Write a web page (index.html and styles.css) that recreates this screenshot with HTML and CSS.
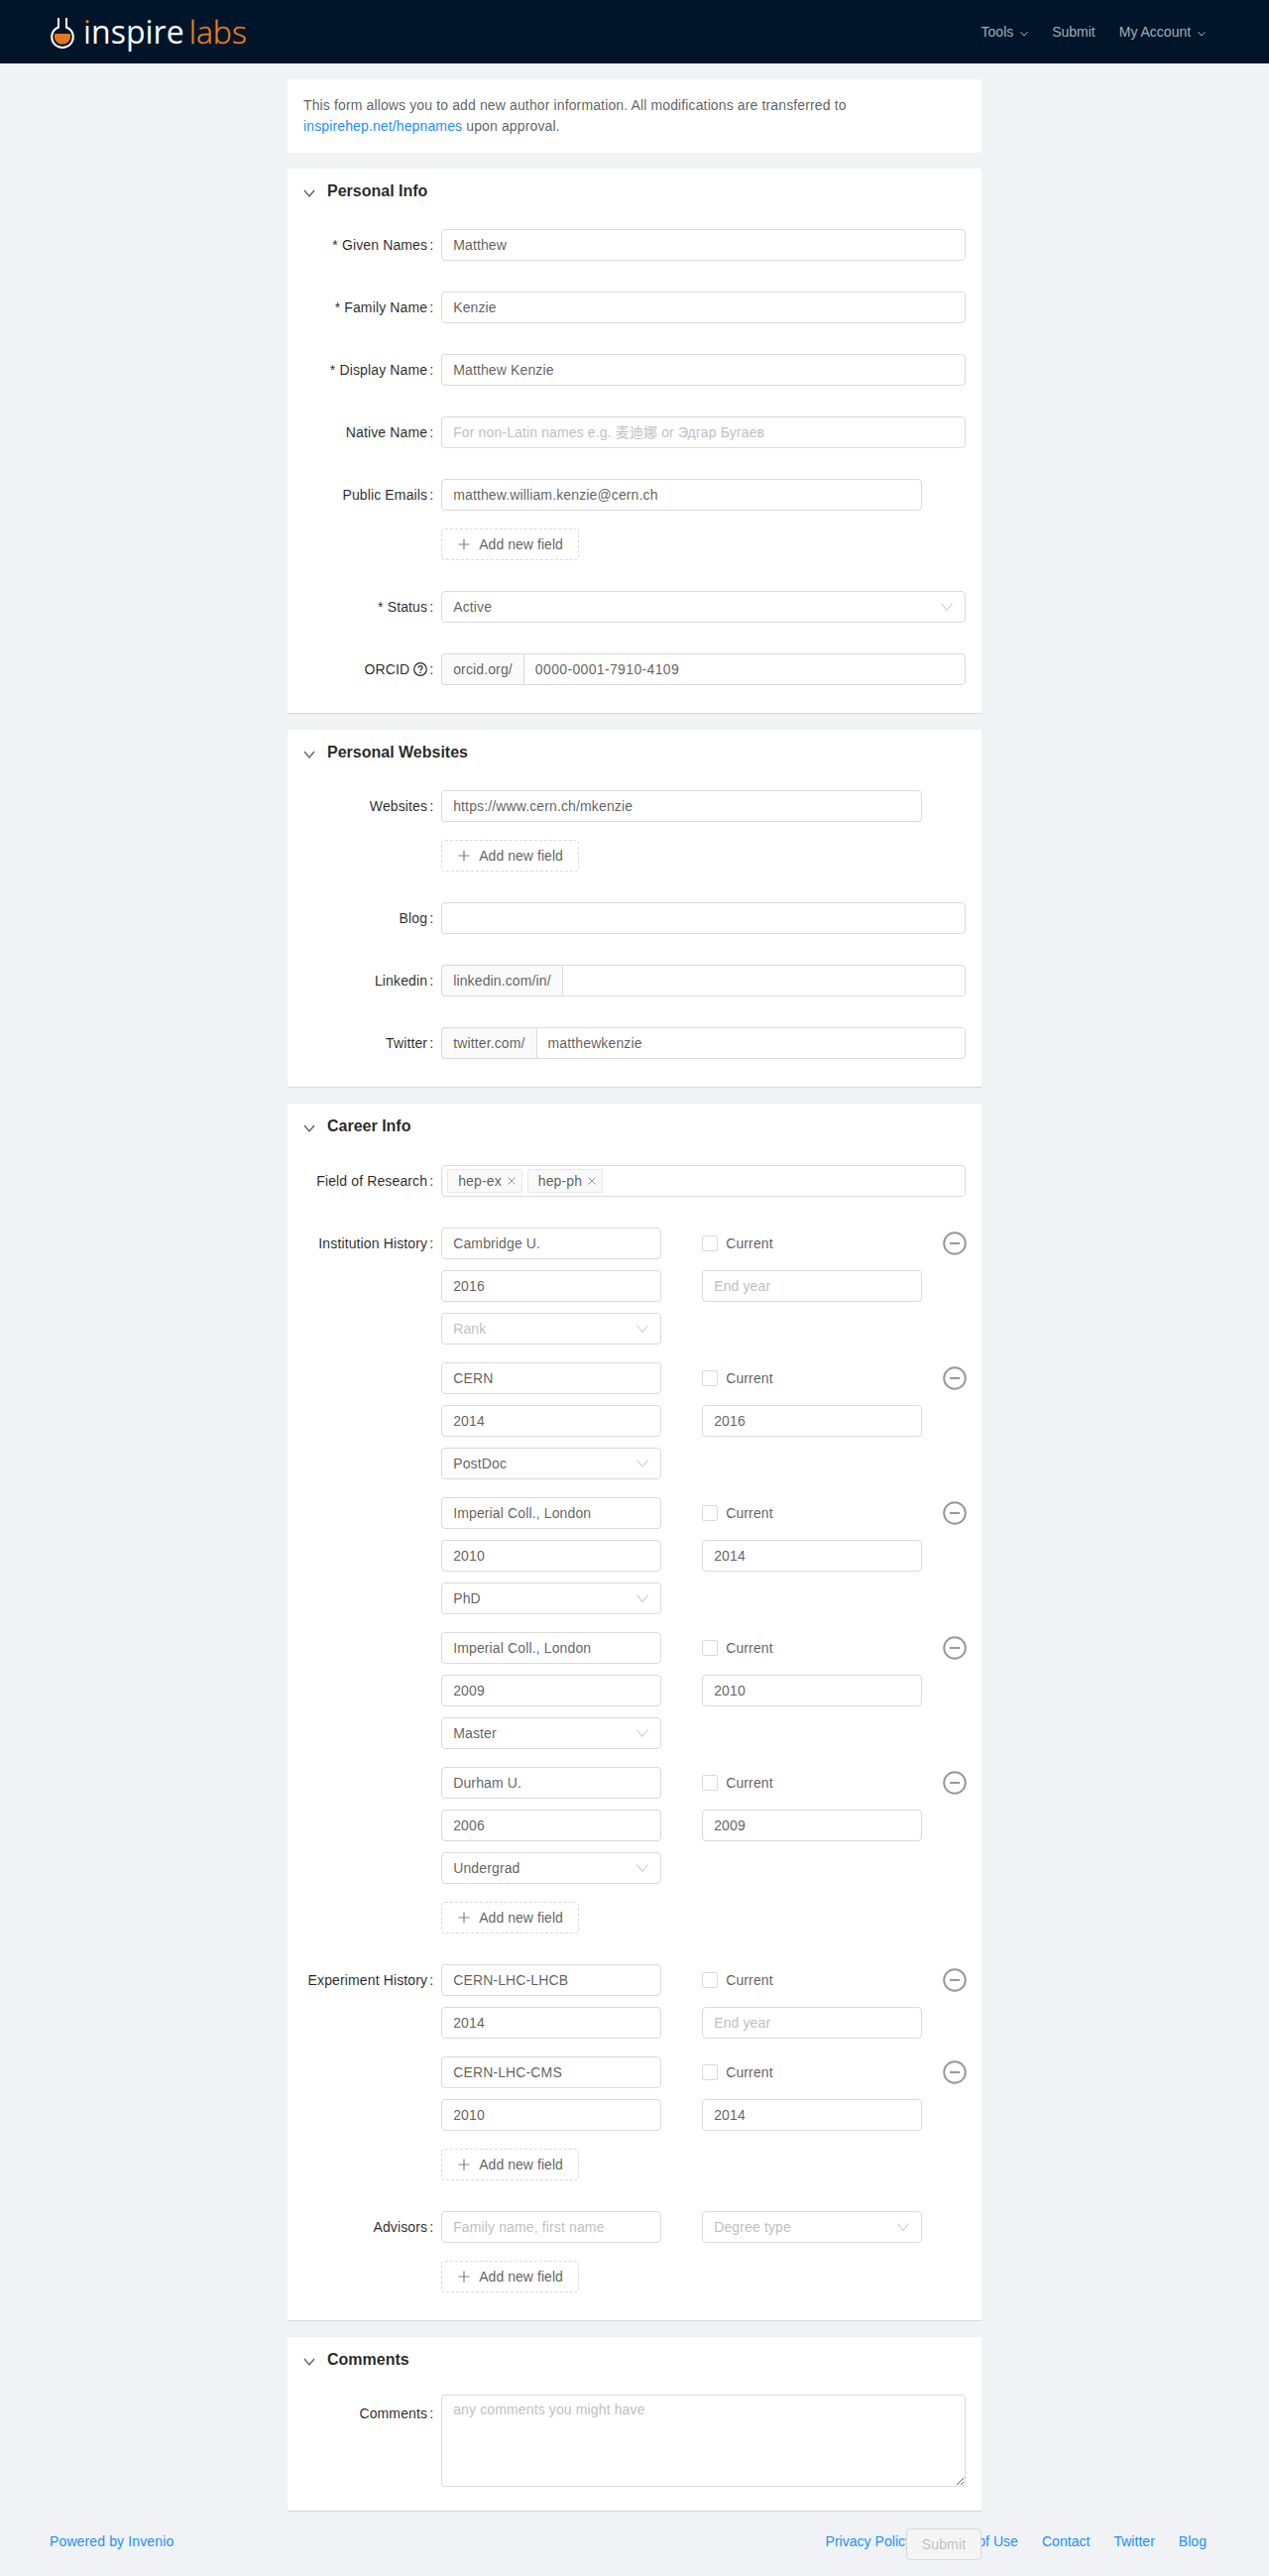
FILE: index.html
```html
<!DOCTYPE html>
<html lang="en">
<head>
  <meta charset="UTF-8">
  <title>inspire labs - Author form</title>
  <link rel="stylesheet" href="styles.css">
</head>
<body>
  <!-- top bar -->
  <header class="topbar">
    <a class="logo" href="#">
      <svg class="logo-flask" viewBox="0 0 24 32" width="24" height="32">
        <path class="flask-liquid" d="M4.3 17h15.4c1.6 6-2 10.6-7.7 10.6S2.7 23 4.3 17z"/>
        <path class="flask-glass" d="M8 1v9.5C3.8 12.3 1.2 16 1.2 20.3 1.2 26.3 6 31 12 31s10.8-4.7 10.8-10.7c0-4.3-2.6-8-6.8-9.8V1"/>
      </svg>
      <span class="logo-text"><span class="logo-i">i</span>nspire</span>
      <span class="logo-labs">labs</span>
    </a>
    <nav class="topnav">
      <a href="#">Tools <svg class="nav-arrow" viewBox="0 0 8 6" width="8" height="6"><path d="M.3 1L4 5l3.700-4"/></svg></a>
      <a href="#">Submit</a>
      <a href="#">My Account <svg class="nav-arrow" viewBox="0 0 8 6" width="8" height="6"><path d="M.3 1L4 5l3.700-4"/></svg></a>
    </nav>
  </header>

  <main class="content">
    <div class="card intro">
      This form allows you to add new author information. All modifications are transferred to
      <a href="#">inspirehep.net/hepnames</a> upon approval.
    </div>

    <!-- Personal Info -->
    <section class="card">
      <h2 class="card-title"><svg class="title-arrow" viewBox="0 0 12 8" width="12" height="8"><path d="M1 1l5 6 5-6"/></svg>Personal Info</h2>
      <div class="form-item">
        <label class="form-label">* Given Names<span class="colon">:</span></label>
        <input class="input" type="text" value="Matthew">
      </div>
      <div class="form-item">
        <label class="form-label">* Family Name<span class="colon">:</span></label>
        <input class="input" type="text" value="Kenzie">
      </div>
      <div class="form-item">
        <label class="form-label">* Display Name<span class="colon">:</span></label>
        <input class="input" type="text" value="Matthew Kenzie">
      </div>
      <div class="form-item">
        <label class="form-label">Native Name<span class="colon">:</span></label>
        <input class="input" type="text" placeholder="For non-Latin names e.g. 麦迪娜 or Эдгар Бугаев">
      </div>
      <div class="form-item">
        <label class="form-label">Public Emails<span class="colon">:</span></label>
        <div class="field-list">
          <input class="input input-short" type="text" value="matthew.william.kenzie@cern.ch">
          <button class="add-btn" type="button"><svg class="plus" viewBox="0 0 12 12" width="12" height="12"><path d="M6 .5v11M.5 6h11"/></svg>Add new field</button>
        </div>
      </div>
      <div class="form-item">
        <label class="form-label">* Status<span class="colon">:</span></label>
        <div class="select"><span>Active</span><svg class="select-arrow" viewBox="0 0 12 8" width="12" height="8"><path d="M.5.5L6 7.5l5.500-7"/></svg></div>
      </div>
      <div class="form-item">
        <label class="form-label">ORCID <svg class="help" viewBox="0 0 14 14" width="14" height="14"><circle cx="7" cy="7" r="6.3"/><path d="M5 5.500C5 4.300 5.900 3.600 7 3.600s2 .7 2 1.800c0 1.500-2 1.600-2 3.100"/><circle class="help-dot" cx="7" cy="10.400" r=".8"/></svg><span class="colon">:</span></label>
        <div class="input-group">
          <span class="addon">orcid.org/</span>
          <input class="input input-digits" type="text" value="0000-0001-7910-4109">
        </div>
      </div>
    </section>

    <!-- Personal Websites -->
    <section class="card">
      <h2 class="card-title"><svg class="title-arrow" viewBox="0 0 12 8" width="12" height="8"><path d="M1 1l5 6 5-6"/></svg>Personal Websites</h2>
      <div class="form-item">
        <label class="form-label">Websites<span class="colon">:</span></label>
        <div class="field-list">
          <input class="input input-short" type="text" value="https://www.cern.ch/mkenzie">
          <button class="add-btn" type="button"><svg class="plus" viewBox="0 0 12 12" width="12" height="12"><path d="M6 .5v11M.5 6h11"/></svg>Add new field</button>
        </div>
      </div>
      <div class="form-item">
        <label class="form-label">Blog<span class="colon">:</span></label>
        <input class="input" type="text">
      </div>
      <div class="form-item">
        <label class="form-label">Linkedin<span class="colon">:</span></label>
        <div class="input-group">
          <span class="addon">linkedin.com/in/</span>
          <input class="input" type="text">
        </div>
      </div>
      <div class="form-item">
        <label class="form-label">Twitter<span class="colon">:</span></label>
        <div class="input-group">
          <span class="addon">twitter.com/</span>
          <input class="input" type="text" value="matthewkenzie">
        </div>
      </div>
    </section>

    <!-- Career Info -->
    <section class="card card-career">
      <h2 class="card-title"><svg class="title-arrow" viewBox="0 0 12 8" width="12" height="8"><path d="M1 1l5 6 5-6"/></svg>Career Info</h2>
      <div class="form-item">
        <label class="form-label">Field of Research<span class="colon">:</span></label>
        <div class="tags-select">
          <span class="tag">hep-ex<svg class="tag-x" viewBox="0 0 8 8" width="8" height="8"><path d="M.5.5l7 7M7.5.5l-7 7"/></svg></span>
          <span class="tag">hep-ph<svg class="tag-x" viewBox="0 0 8 8" width="8" height="8"><path d="M.5.5l7 7M7.5.5l-7 7"/></svg></span>
        </div>
      </div>
      <div class="form-item">
        <label class="form-label">Institution History<span class="colon">:</span></label>
        <div class="field-list">
          <div class="entry">
            <div class="entry-col">
              <input class="input" type="text" value="Cambridge U.">
              <input class="input" type="text" value="2016">
              <div class="select placeholder"><span>Rank</span><svg class="select-arrow" viewBox="0 0 12 8" width="12" height="8"><path d="M.5.5L6 7.5l5.500-7"/></svg></div>
            </div>
            <div class="entry-col">
              <label class="check"><span class="check-box"></span>Current</label>
              <input class="input" type="text" placeholder="End year">
            </div>
            <div class="entry-action"><svg class="minus" viewBox="0 0 24 24" width="24" height="24"><circle cx="12" cy="12" r="10.8"/><path d="M7 12h10"/></svg></div>
          </div>
          <div class="entry">
            <div class="entry-col">
              <input class="input" type="text" value="CERN">
              <input class="input" type="text" value="2014">
              <div class="select"><span>PostDoc</span><svg class="select-arrow" viewBox="0 0 12 8" width="12" height="8"><path d="M.5.5L6 7.5l5.500-7"/></svg></div>
            </div>
            <div class="entry-col">
              <label class="check"><span class="check-box"></span>Current</label>
              <input class="input" type="text" value="2016">
            </div>
            <div class="entry-action"><svg class="minus" viewBox="0 0 24 24" width="24" height="24"><circle cx="12" cy="12" r="10.8"/><path d="M7 12h10"/></svg></div>
          </div>
          <div class="entry">
            <div class="entry-col">
              <input class="input" type="text" value="Imperial Coll., London">
              <input class="input" type="text" value="2010">
              <div class="select"><span>PhD</span><svg class="select-arrow" viewBox="0 0 12 8" width="12" height="8"><path d="M.5.5L6 7.5l5.500-7"/></svg></div>
            </div>
            <div class="entry-col">
              <label class="check"><span class="check-box"></span>Current</label>
              <input class="input" type="text" value="2014">
            </div>
            <div class="entry-action"><svg class="minus" viewBox="0 0 24 24" width="24" height="24"><circle cx="12" cy="12" r="10.8"/><path d="M7 12h10"/></svg></div>
          </div>
          <div class="entry">
            <div class="entry-col">
              <input class="input" type="text" value="Imperial Coll., London">
              <input class="input" type="text" value="2009">
              <div class="select"><span>Master</span><svg class="select-arrow" viewBox="0 0 12 8" width="12" height="8"><path d="M.5.5L6 7.5l5.500-7"/></svg></div>
            </div>
            <div class="entry-col">
              <label class="check"><span class="check-box"></span>Current</label>
              <input class="input" type="text" value="2010">
            </div>
            <div class="entry-action"><svg class="minus" viewBox="0 0 24 24" width="24" height="24"><circle cx="12" cy="12" r="10.8"/><path d="M7 12h10"/></svg></div>
          </div>
          <div class="entry">
            <div class="entry-col">
              <input class="input" type="text" value="Durham U.">
              <input class="input" type="text" value="2006">
              <div class="select"><span>Undergrad</span><svg class="select-arrow" viewBox="0 0 12 8" width="12" height="8"><path d="M.5.5L6 7.5l5.500-7"/></svg></div>
            </div>
            <div class="entry-col">
              <label class="check"><span class="check-box"></span>Current</label>
              <input class="input" type="text" value="2009">
            </div>
            <div class="entry-action"><svg class="minus" viewBox="0 0 24 24" width="24" height="24"><circle cx="12" cy="12" r="10.8"/><path d="M7 12h10"/></svg></div>
          </div>
          <button class="add-btn" type="button"><svg class="plus" viewBox="0 0 12 12" width="12" height="12"><path d="M6 .5v11M.5 6h11"/></svg>Add new field</button>
        </div>
      </div>
      <div class="form-item">
        <label class="form-label">Experiment History<span class="colon">:</span></label>
        <div class="field-list">
          <div class="entry">
            <div class="entry-col">
              <input class="input" type="text" value="CERN-LHC-LHCB">
              <input class="input" type="text" value="2014">
            </div>
            <div class="entry-col">
              <label class="check"><span class="check-box"></span>Current</label>
              <input class="input" type="text" placeholder="End year">
            </div>
            <div class="entry-action"><svg class="minus" viewBox="0 0 24 24" width="24" height="24"><circle cx="12" cy="12" r="10.8"/><path d="M7 12h10"/></svg></div>
          </div>
          <div class="entry">
            <div class="entry-col">
              <input class="input" type="text" value="CERN-LHC-CMS">
              <input class="input" type="text" value="2010">
            </div>
            <div class="entry-col">
              <label class="check"><span class="check-box"></span>Current</label>
              <input class="input" type="text" value="2014">
            </div>
            <div class="entry-action"><svg class="minus" viewBox="0 0 24 24" width="24" height="24"><circle cx="12" cy="12" r="10.8"/><path d="M7 12h10"/></svg></div>
          </div>
          <button class="add-btn" type="button"><svg class="plus" viewBox="0 0 12 12" width="12" height="12"><path d="M6 .5v11M.5 6h11"/></svg>Add new field</button>
        </div>
      </div>
      <div class="form-item">
        <label class="form-label">Advisors<span class="colon">:</span></label>
        <div class="field-list">
          <div class="entry">
            <div class="entry-col">
              <input class="input" type="text" placeholder="Family name, first name">
            </div>
            <div class="entry-col">
              <div class="select placeholder"><span>Degree type</span><svg class="select-arrow" viewBox="0 0 12 8" width="12" height="8"><path d="M.5.5L6 7.5l5.500-7"/></svg></div>
            </div>
          </div>
          <button class="add-btn" type="button"><svg class="plus" viewBox="0 0 12 12" width="12" height="12"><path d="M6 .5v11M.5 6h11"/></svg>Add new field</button>
        </div>
      </div>
    </section>

    <!-- Comments -->
    <section class="card card-comments">
      <h2 class="card-title"><svg class="title-arrow" viewBox="0 0 12 8" width="12" height="8"><path d="M1 1l5 6 5-6"/></svg>Comments</h2>
      <div class="form-item">
        <label class="form-label label-top">Comments<span class="colon">:</span></label>
        <textarea class="input textarea" placeholder="any comments you might have"></textarea>
      </div>
    </section>

    <button class="submit-btn" type="button" disabled>Submit</button>
  </main>

  <footer class="footer">
    <a href="#">Powered by Invenio</a>
    <div class="footer-links">
      <a href="#">Privacy Policy</a>
      <a href="#">Terms of Use</a>
      <a href="#">Contact</a>
      <a href="#">Twitter</a>
      <a href="#">Blog</a>
    </div>
  </footer>
</body>
</html>
```

FILE: styles.css
```css
* { box-sizing: border-box; margin: 0; padding: 0; }
body {
  font-family: "Liberation Sans", "Noto Sans CJK SC", sans-serif;
  font-size: 14px;
  line-height: 21px;
  letter-spacing: 0.13px;
  color: rgba(0, 0, 0, 0.65);
  background-color: #f0f2f5;
}
a { color: #1890ff; text-decoration: none; }

/* top bar */
.topbar {
  height: 64px;
  background-color: #001529;
  display: flex;
  align-items: center;
  justify-content: space-between;
  padding: 0 64px 0 51px;
}
.logo { display: flex; align-items: center; letter-spacing: 0; }
.logo-flask { margin-right: 9px; margin-top: 1px; }
.flask-glass { fill: none; stroke: #fff; stroke-width: 2; }
.flask-liquid { fill: #e5761f; }
.logo-text, .logo-labs {
  font-family: "Open Sans", sans-serif;
  font-size: 32px;
  line-height: 64px;
}
.logo-text { color: #fff; font-weight: 400; }
.logo-i {
  background: linear-gradient(#e5761f 0 38%, #fff 38%);
  -webkit-background-clip: text;
  background-clip: text;
  -webkit-text-fill-color: transparent;
}
.logo-labs {
  color: #ee8020;
  font-weight: 300;
  margin-left: 5px;
  -webkit-text-stroke: 0.3px #ee8020;
}
.topnav { display: flex; gap: 24px; letter-spacing: 0; }
.topnav a { color: rgba(255, 255, 255, 0.65); }
.nav-arrow { fill: none; stroke: rgba(255, 255, 255, 0.65); stroke-width: 1; margin-left: 3px; }

/* cards */
.content {
  position: relative;
  width: 700px;
  margin: 16px auto 0;
}
.card {
  background-color: #fff;
  padding: 0 16px 28px;
  margin-bottom: 16px;
  border-bottom: 1px solid #d9d9d9;
}
.card.intro { padding: 16px; border-bottom: 0; }
.card-comments { padding-bottom: 24px; margin-bottom: 0; }
.card-title {
  display: flex;
  align-items: center;
  font-size: 16px;
  line-height: 22px;
  font-weight: bold;
  letter-spacing: 0;
  color: rgba(0, 0, 0, 0.85);
  padding-top: 12px;
  margin-bottom: 27px;
}
.card-career .card-title { margin-bottom: 28px; }
.card-comments .card-title { margin-bottom: 24px; }
.title-arrow {
  width: 24px;
  padding-right: 12px;
  margin-top: 4px;
  fill: none;
  stroke: rgba(0, 0, 0, 0.65);
  stroke-width: 1.2;
  overflow: visible;
}

/* form rows */
.form-item {
  display: grid;
  grid-template-columns: 139.2px 1fr;
  margin-bottom: 31px;
}
.form-item:last-child { margin-bottom: 0; }
.form-label {
  display: flex;
  justify-content: flex-end;
  align-items: flex-start;
  line-height: 32px;
  color: rgba(0, 0, 0, 0.85);
  white-space: pre;
}
.label-top { padding-top: 3px; }
.colon { margin: 0 8px 0 2px; }
.help {
  align-self: flex-start;
  margin-top: 9px;
  fill: none;
  stroke: rgba(0, 0, 0, 0.85);
  stroke-width: 1.2;
}
.help-dot { fill: rgba(0, 0, 0, 0.85); stroke: none; }

.input {
  display: block;
  width: 100%;
  height: 32px;
  padding: 4px 11px;
  font: inherit;
  letter-spacing: inherit;
  color: rgba(0, 0, 0, 0.65);
  background-color: #fff;
  border: 1px solid #d9d9d9;
  border-radius: 4px;
  outline: none;
}
.input::placeholder { color: #bfbfbf; }
.input-short { width: 484.7px; }
.input-digits { letter-spacing: 0.35px; }
.textarea { height: 93px; line-height: 21px; }

.select {
  display: flex;
  align-items: center;
  justify-content: space-between;
  height: 32px;
  padding: 0 12px 0 11px;
  background-color: #fff;
  border: 1px solid #d9d9d9;
  border-radius: 4px;
}
.select.placeholder { color: #bfbfbf; }
.select-arrow { fill: none; stroke: #bfbfbf; stroke-width: 1; }

.input-group { display: flex; }
.addon {
  padding: 0 11px;
  line-height: 30px;
  background-color: #fafafa;
  border: 1px solid #d9d9d9;
  border-right: 0;
  border-radius: 4px 0 0 4px;
  white-space: nowrap;
}
.input-group .input { flex: 1; min-width: 0; border-radius: 0 4px 4px 0; }

.field-list { display: flex; flex-direction: column; gap: 18px; }
.add-btn {
  display: flex;
  align-items: center;
  align-self: flex-start;
  height: 32px;
  padding: 0 15px 0 16px;
  font: inherit;
  letter-spacing: 0.05px;
  color: rgba(0, 0, 0, 0.65);
  background-color: #fff;
  border: 1px dashed #d9d9d9;
  border-radius: 4px;
}
.plus { fill: none; stroke: rgba(0, 0, 0, 0.5); stroke-width: 1.2; margin-right: 9px; }

/* tags */
.tags-select {
  display: flex;
  align-items: center;
  gap: 5px;
  height: 32px;
  padding: 0 5px;
  border: 1px solid #d9d9d9;
  border-radius: 4px;
}
.tag {
  display: flex;
  align-items: center;
  height: 24px;
  padding: 0 6px 0 10px;
  line-height: 22px;
  background-color: #fafafa;
  border: 1px solid #e8e8e8;
  border-radius: 2px;
}
.tag-x { fill: none; stroke: rgba(0, 0, 0, 0.4); stroke-width: 1; margin-left: 6px; }

/* repeated history entries */
.entry { display: flex; }
.entry-col {
  display: flex;
  flex-direction: column;
  gap: 11px;
  width: 221.6px;
}
.entry-col + .entry-col { margin-left: 41.4px; }
.entry-action { padding-left: 21.6px; padding-top: 4px; }
.minus { display: block; fill: none; stroke: #999; stroke-width: 2; }
.check {
  display: flex;
  align-items: center;
  height: 32px;
}
.check-box {
  width: 16px;
  height: 16px;
  margin-right: 8px;
  background-color: #fff;
  border: 1px solid #d9d9d9;
  border-radius: 2px;
}

.submit-btn {
  position: absolute;
  right: 0;
  bottom: -49px;
  width: 76px;
  height: 32px;
  font: inherit;
  letter-spacing: inherit;
  color: rgba(0, 0, 0, 0.25);
  background-color: #f5f5f5;
  border: 1px solid #d9d9d9;
  border-radius: 4px;
}

/* footer */
.footer {
  display: flex;
  justify-content: space-between;
  padding: 20px 63px 23px 50px;
}
.footer-links { display: flex; gap: 24px; letter-spacing: 0.03px; }
```
